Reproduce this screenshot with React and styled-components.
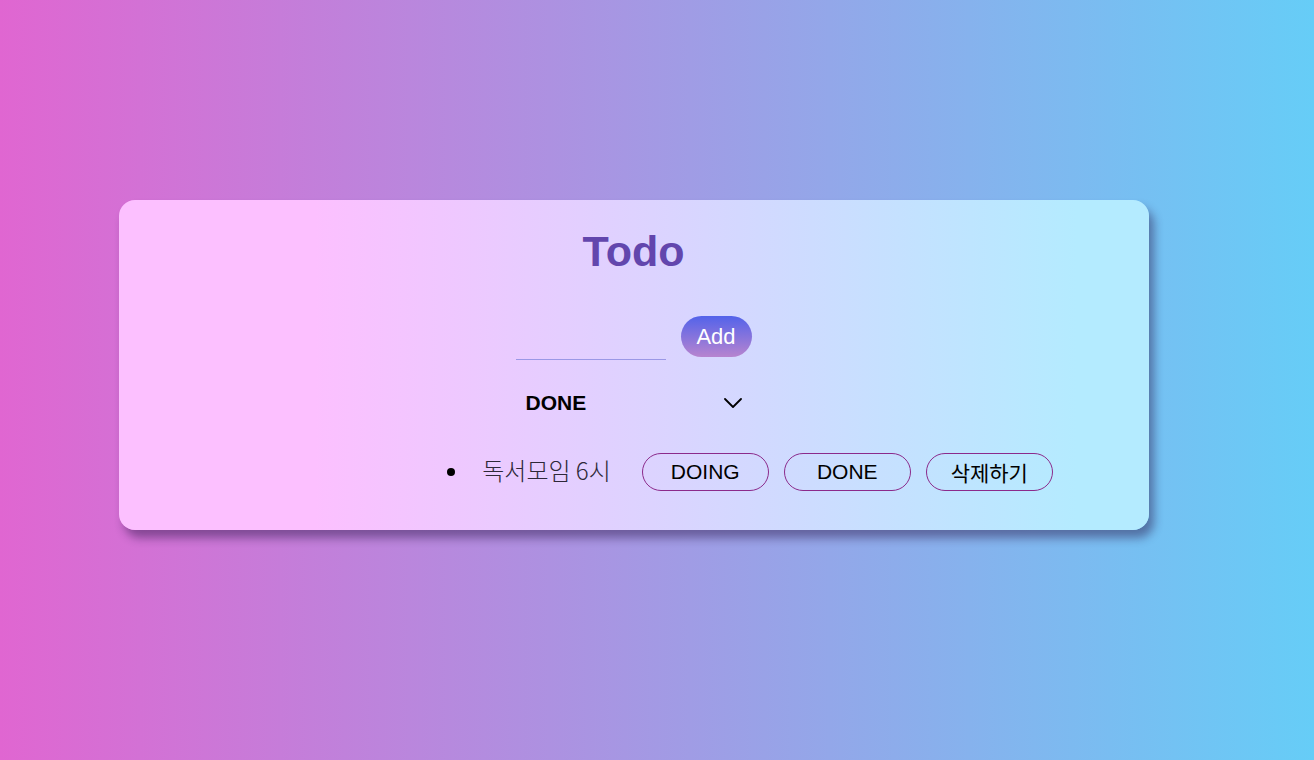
import React from "react";
import styled, { createGlobalStyle } from "styled-components";

const GlobalStyle = createGlobalStyle`
  * { box-sizing: border-box; }
  html, body { margin: 0; padding: 0; }
  body {
    font-family: "Liberation Sans", Arial, "Noto Sans CJK KR", sans-serif;
    background: linear-gradient(to right, #e066d1 0%, #66cdf7 100%);
    min-height: 760px;
  }
`;

const Page = styled.main`
  height: 760px;
  padding-top: 200px;
  padding-right: 47px;
  display: flex;
  justify-content: center;
`;

const Card = styled.section`
  width: 1030px;
  height: 330px;
  border-radius: 16px;
  background: linear-gradient(to right, #fcc0ff 19%, #b4ebff 93%);
  box-shadow: 5px 8px 10px rgba(40, 20, 70, 0.45);
  display: flex;
  flex-direction: column;
  align-items: center;
  padding-top: 26px;
`;

const Title = styled.h1`
  margin: 0;
  font-size: 43px;
  line-height: 50px;
  font-weight: 700;
  color: #6246ad;
`;

const Form = styled.form`
  margin-top: 40px;
  display: flex;
  align-items: flex-start;
  gap: 15px;
`;

const Input = styled.input`
  width: 150px;
  height: 44px;
  border: none;
  border-bottom: 1px solid #9b98e6;
  background: transparent;
  outline: none;
  font-size: 18px;
  font-family: inherit;
`;

const AddButton = styled.button`
  width: 71px;
  height: 41px;
  border: none;
  border-radius: 21px;
  background: linear-gradient(to bottom, #5363ea 0%, #b784cf 100%);
  color: #fff;
  font-family: inherit;
  font-size: 22px;
  padding: 0;
  cursor: pointer;
`;

const SelectBox = styled.div`
  margin-top: 25px;
  width: 236px;
  height: 36px;
  padding: 0 10px 0 10px;
  display: flex;
  align-items: center;
  justify-content: space-between;
  font-size: 21px;
  font-weight: 700;
  color: #000;
`;

const List = styled.ul`
  margin: 32px 0 0 0;
  padding: 0 0 0 233px;
  list-style: none;
  align-self: stretch;
  display: flex;
  justify-content: center;
`;

const Item = styled.li`
  display: flex;
  align-items: center;
  &::before {
    content: "";
    width: 8px;
    height: 8px;
    border-radius: 50%;
    background: #000;
    margin-right: 27px;
  }
`;

const ItemText = styled.span`
  font-family: "Noto Sans CJK KR", sans-serif;
  font-weight: 300;
  font-size: 24px;
  line-height: 30px;
  color: #2e2838;
  margin-right: 31px;
  margin-top: -4px;
`;

const Actions = styled.div`
  display: flex;
  gap: 15px;
`;

const StatusButton = styled.button`
  width: 127px;
  height: 38px;
  border: 1px solid #8b2a8b;
  border-radius: 19px;
  background: transparent;
  color: #000;
  font-family: "Liberation Sans", Arial, "Noto Sans CJK KR", sans-serif;
  font-size: 21px;
  padding: 0;
  cursor: pointer;
`;

const Chevron = () => (
  <svg width="18" height="10" viewBox="0 0 18 10" fill="none">
    <path d="M1 1 L9 9 L17 1" stroke="#000" strokeWidth="1.8" strokeLinecap="round" strokeLinejoin="round" />
  </svg>
);

export default function App() {
  return (
    <>
      <GlobalStyle />
      <Page>
        <Card>
          <Title>Todo</Title>
          <Form onSubmit={(e) => e.preventDefault()}>
            <Input type="text" />
            <AddButton type="submit">Add</AddButton>
          </Form>
          <SelectBox>
            <span>DONE</span>
            <Chevron />
          </SelectBox>
          <List>
            <Item>
              <ItemText>독서모임 6시</ItemText>
              <Actions>
                <StatusButton>DOING</StatusButton>
                <StatusButton>DONE</StatusButton>
                <StatusButton>삭제하기</StatusButton>
              </Actions>
            </Item>
          </List>
        </Card>
      </Page>
    </>
  );
}
